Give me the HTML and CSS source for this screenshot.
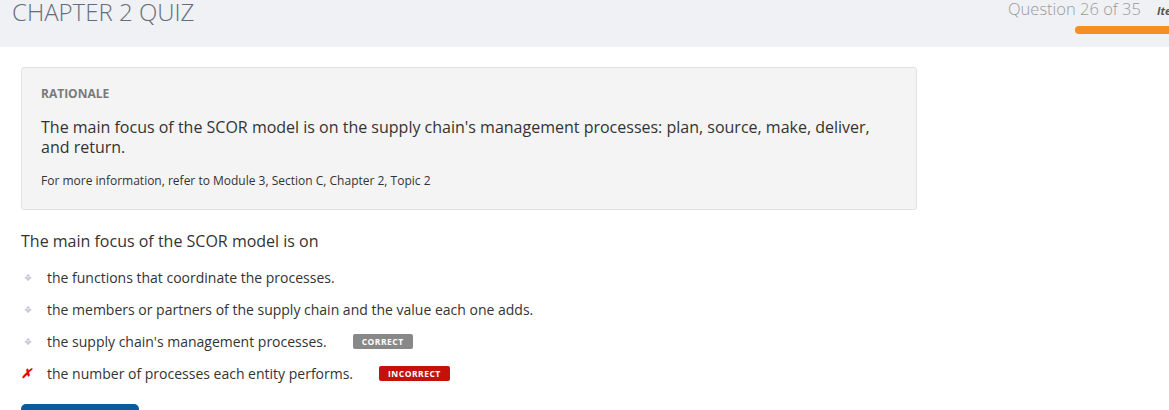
FILE: index.html
```html
<!DOCTYPE html>
<html>
<head>
<meta charset="utf-8">
<link rel="stylesheet" href="styles.css">
</head>
<body>
<header class="topbar">
  <h1 class="title">CHAPTER 2 QUIZ</h1>
  <div class="progress">
    <div class="progress-row">
      <span class="qcount">Question 26 of 35</span>
      <span class="item">Item</span>
    </div>
    <div class="bar"></div>
  </div>
</header>
<main class="content">
  <section class="rationale">
    <div class="rat-label">RATIONALE</div>
    <p class="rat-text">The main focus of the SCOR model is on the supply chain's management processes: plan, source, make, deliver, and return.</p>
    <p class="rat-ref">For more information, refer to Module 3, Section C, Chapter 2, Topic 2</p>
  </section>
  <p class="question">The main focus of the SCOR model is on</p>
  <ul class="options">
    <li class="option"><span class="mark dot">&#10070;</span><span class="opt-text">the functions that coordinate the processes.</span></li>
    <li class="option"><span class="mark dot">&#10070;</span><span class="opt-text">the members or partners of the supply chain and the value each one adds.</span></li>
    <li class="option"><span class="mark dot">&#10070;</span><span class="opt-text">the supply chain's management processes.</span><span class="badge correct">CORRECT</span></li>
    <li class="option"><span class="mark cross">&#10007;</span><span class="opt-text">the number of processes each entity performs.</span><span class="badge incorrect">INCORRECT</span></li>
  </ul>
  <button class="next">Next</button>
</main>
</body>
</html>
```
FILE: styles.css
```css
html, body {
  margin: 0;
  padding: 0;
  overflow: hidden;
  background: #fff;
  font-family: "Open Sans", "Noto Sans", sans-serif;
  color: #333;
}
.topbar {
  height: 47px;
  background: #eff1f5;
  display: flex;
  justify-content: space-between;
  align-items: flex-start;
  overflow: hidden;
}
.title {
  margin: -2px 0 0;
  padding-left: 12px;
  font-size: 24px;
  font-weight: 300;
  line-height: 28px;
  color: #646d79;
}
.progress {
  width: 200px;
  flex: none;
  margin-right: -106px;
}
.progress-row {
  display: flex;
  align-items: baseline;
  white-space: nowrap;
  height: 17px;
  margin-left: -67px;
}
.qcount {
  font-size: 16.5px;
  font-weight: 300;
  color: #9a9a9a;
  line-height: 17px;
}
.item {
  margin-left: 16px;
  font-size: 11px;
  font-weight: 700;
  font-style: italic;
  color: #555;
}
.bar {
  margin-top: 9px;
  height: 8px;
  background: #f39020;
  border-radius: 4px 0 0 4px;
}
.content {
  padding-left: 21px;
}
.rationale {
  margin-top: 20px;
  width: 855px;
  height: 106px;
  background: #f4f4f4;
  border: 1px solid #e2e2e2;
  border-radius: 3px;
  padding: 18px 20px 17px 19px;
}
.rat-label {
  font-size: 12px;
  font-weight: 700;
  color: #7a7a7a;
  line-height: 16px;
}
.rat-text {
  margin: 15px 0 0;
  font-size: 16px;
  line-height: 20px;
  color: #333;
}
.rat-ref {
  margin: 16px 0 0;
  font-size: 12px;
  line-height: 16px;
  color: #333;
}
.question {
  margin: 20px 0 0;
  font-size: 16px;
  line-height: 22px;
  color: #333;
}
.options {
  list-style: none;
  margin: 9px 0 0;
  padding: 0;
}
.option {
  display: flex;
  align-items: center;
  height: 32px;
  font-size: 14px;
  color: #333;
}
.mark {
  width: 26px;
  flex: none;
}
.dot {
  font-size: 9px;
  color: #c4c4c4;
  padding-left: 3px;
  width: 23px;
}
.cross {
  color: #e60000;
  font-size: 13px;
  font-weight: 700;
  font-style: italic;
}
.badge {
  margin-left: 26px;
  font-size: 8.5px;
  font-weight: 700;
  color: #fff;
  letter-spacing: 0.5px;
  padding: 0 9px;
  height: 15px;
  line-height: 15px;
  border-radius: 2px;
}
.correct {
  background: #888888;
}
.incorrect {
  background: #c4120a;
}
.next {
  margin-top: 15px;
  width: 118px;
  height: 36px;
  background: #0a5b9d;
  border: none;
  border-radius: 5px;
  color: #fff;
  font-family: inherit;
  font-size: 14px;
}
```
